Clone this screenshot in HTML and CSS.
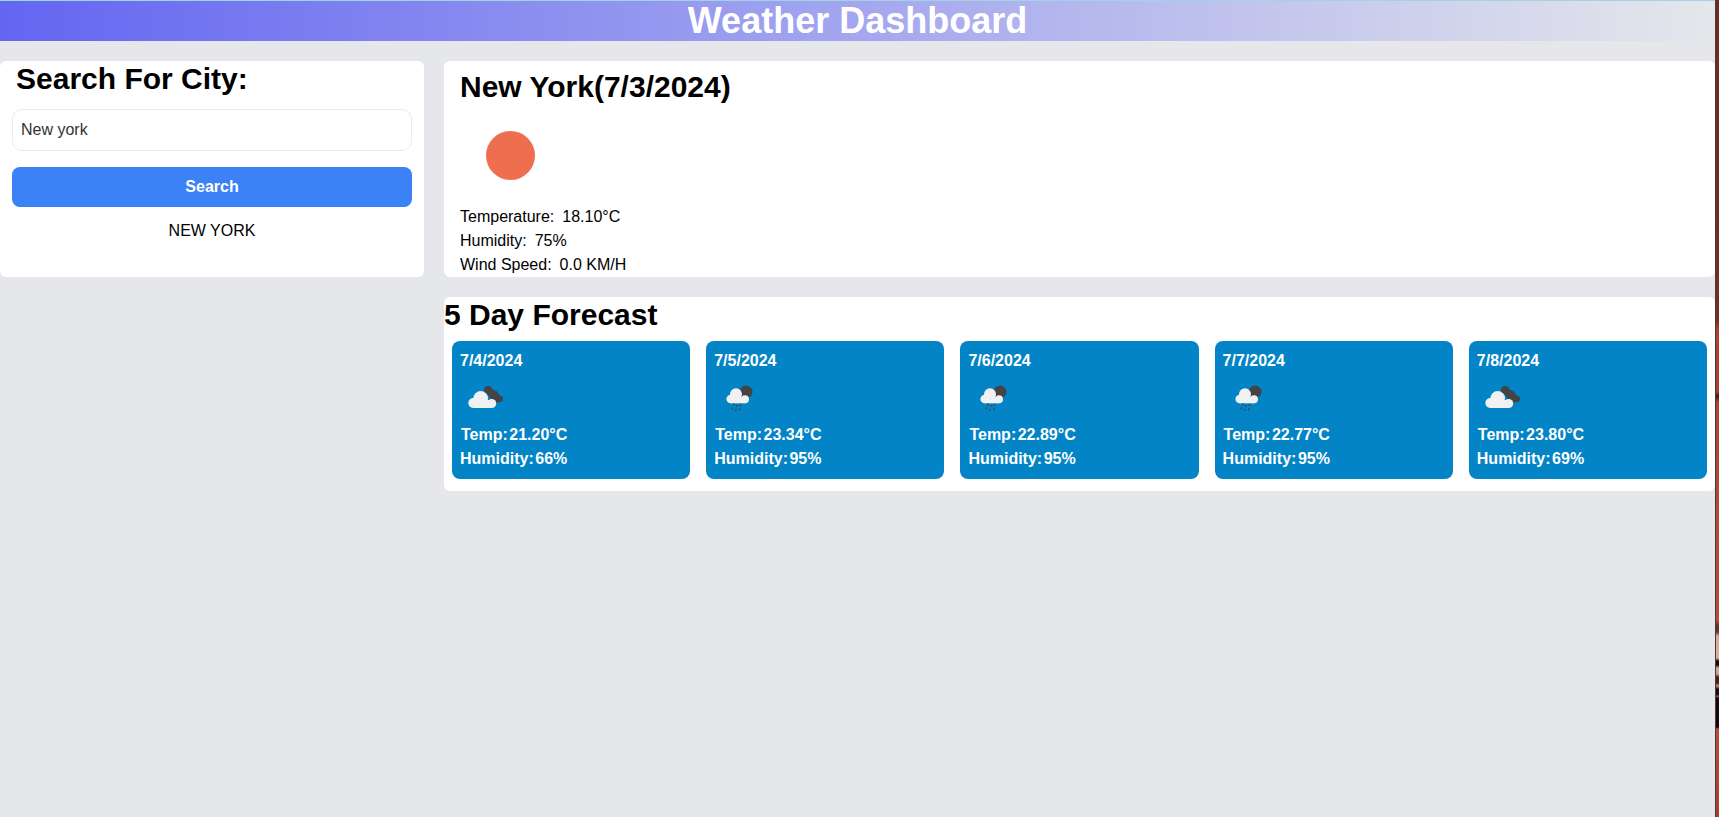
FILE: index.html
```html
<!DOCTYPE html>
<html lang="en">
<head>
<meta charset="utf-8">
<title>Weather Dashboard</title>
<link rel="stylesheet" href="styles.css">
</head>
<body>
<div class="page">
  <header class="banner"><h1 class="banner-title">Weather Dashboard</h1></header>
  <main class="layout">
    <aside class="search-card">
      <h2 class="search-title">Search For City:</h2>
      <input class="search-input" type="text" value="New york">
      <button class="search-button" type="button">Search</button>
      <p class="history-item">NEW YORK</p>
    </aside>
    <div class="results">
      <section class="current">
        <h2 class="section-title">New York(7/3/2024)</h2>
        <svg class="current-icon" viewBox="0 0 100 100"><circle cx="50.500" cy="50.500" r="24.500" fill="#ee6f4f"/></svg>
        <p class="stat"><span>Temperature:</span><span class="stat-value">18.10°C</span></p>
        <p class="stat"><span>Humidity:</span><span class="stat-value">75%</span></p>
        <p class="stat"><span>Wind Speed:</span><span class="stat-value">0.0 KM/H</span></p>
      </section>
      <section class="forecast">
        <h2 class="forecast-title">5 Day Forecast</h2>
        <div class="forecast-row">
          <article class="day">
            <p class="day-line">7/4/2024</p>
            <svg class="day-icon" viewBox="0 0 50 50"><use href="#clouds"/></svg>
            <p class="day-line"><span class="nudge">Temp:</span><span class="day-value">21.20°C</span></p>
            <p class="day-line"><span>Humidity:</span><span class="day-value">66%</span></p>
          </article>
          <article class="day">
            <p class="day-line">7/5/2024</p>
            <svg class="day-icon" viewBox="0 0 50 50"><use href="#rain"/></svg>
            <p class="day-line"><span class="nudge">Temp:</span><span class="day-value">23.34°C</span></p>
            <p class="day-line"><span>Humidity:</span><span class="day-value">95%</span></p>
          </article>
          <article class="day">
            <p class="day-line">7/6/2024</p>
            <svg class="day-icon" viewBox="0 0 50 50"><use href="#rain"/></svg>
            <p class="day-line"><span class="nudge">Temp:</span><span class="day-value">22.89°C</span></p>
            <p class="day-line"><span>Humidity:</span><span class="day-value">95%</span></p>
          </article>
          <article class="day">
            <p class="day-line">7/7/2024</p>
            <svg class="day-icon" viewBox="0 0 50 50"><use href="#rain"/></svg>
            <p class="day-line"><span class="nudge">Temp:</span><span class="day-value">22.77°C</span></p>
            <p class="day-line"><span>Humidity:</span><span class="day-value">95%</span></p>
          </article>
          <article class="day">
            <p class="day-line">7/8/2024</p>
            <svg class="day-icon" viewBox="0 0 50 50"><use href="#clouds"/></svg>
            <p class="day-line"><span class="nudge">Temp:</span><span class="day-value">23.80°C</span></p>
            <p class="day-line"><span>Humidity:</span><span class="day-value">69%</span></p>
          </article>
        </div>
      </section>
    </div>
  </main>
</div>
<div class="edge"></div>
<svg class="defs" width="0" height="0" aria-hidden="true">
  <defs>
    <g id="clouds">
      <g fill="#444">
        <circle cx="28" cy="17" r="4"/>
        <circle cx="34.500" cy="21" r="3.500"/>
        <circle cx="40" cy="26" r="3"/>
        <path d="M25 18l5-4 12 10-2 5-6 1z"/>
      </g>
      <g fill="#f1f1f1">
        <circle cx="13.300" cy="30" r="5"/>
        <circle cx="20.700" cy="25.300" r="7.300"/>
        <circle cx="31.700" cy="30.500" r="4.500"/>
        <rect x="13" y="27" width="19" height="8"/>
      </g>
    </g>
    <g id="rain">
      <circle cx="32" cy="19" r="6.500" fill="#444"/>
      <g fill="#f1f1f1">
        <circle cx="16.700" cy="26" r="4.300"/>
        <circle cx="22" cy="21.300" r="6"/>
        <circle cx="31" cy="26.300" r="4"/>
        <rect x="16.700" y="24" width="14.500" height="6.300"/>
      </g>
      <path stroke="#444" stroke-width="1.400" fill="none" d="M20 30.500l-.4 1.800M23 32l-.4 1.800M26.500 31l-.4 1.800M18.500 34.500l-.4 1.800M22 36l-.4 1.800M26 35.500l-.4 1.800"/>
    </g>
  </defs>
</svg>
</body>
</html>
```
FILE: styles.css
```css
* {
  box-sizing: border-box;
}

html,
body {
  margin: 0;
  height: 100%;
}

body {
  display: flex;
  background: #e5e7eb;
  color: #000;
  font: 16px/24px "Liberation Sans", Arial, sans-serif;
  overflow: hidden;
}

p,
h1,
h2 {
  margin: 0;
}

.page {
  flex: 1;
  min-width: 0;
}

.banner {
  height: 41px;
  background: linear-gradient(to right, #6366f1, #e5e7eb);
  border-top: 1px solid #9fd3e6;
  text-align: center;
}

.banner-title {
  color: #fff;
  font-size: 36px;
  line-height: 40px;
  font-weight: 700;
}

.layout {
  display: grid;
  grid-template-columns: 424px 1fr;
  column-gap: 20px;
  align-items: start;
  padding-top: 20px;
}

.search-card {
  height: 216px;
  padding: 0 12px;
  background: #fff;
  border-radius: 6px;
  text-align: center;
}

.search-title {
  margin-left: 4px;
  font-size: 30px;
  line-height: 36px;
  text-align: left;
}

.search-input {
  display: block;
  width: 100%;
  height: 42px;
  margin-top: 12px;
  padding: 0 8px;
  border: 1px solid #e9eaee;
  border-radius: 10px;
  background: #fff;
  color: #333;
  font: inherit;
  outline: none;
}

.search-button {
  display: block;
  width: 100%;
  height: 40px;
  margin-top: 16px;
  border: 0;
  border-radius: 8px;
  background: #3b82f6;
  color: #fff;
  font: inherit;
  font-weight: 700;
}

.history-item {
  margin-top: 12px;
}

.results {
  display: flex;
  flex-direction: column;
  gap: 20px;
}

.current {
  height: 216px;
  padding: 8px 16px 0;
  background: #fff;
  border-radius: 6px;
  overflow: hidden;
}

.section-title {
  font-size: 30px;
  line-height: 36px;
}

.current-icon {
  display: block;
  width: 100px;
  height: 100px;
}

.stat-value {
  margin-left: 8px;
}

.forecast {
  padding-bottom: 12px;
  background: #fff;
  border-radius: 6px;
}

.forecast-title {
  font-size: 30px;
  line-height: 36px;
}

.forecast-row {
  display: grid;
  grid-template-columns: repeat(5, 1fr);
  column-gap: 16px;
  margin-top: 8px;
  padding: 0 8px;
}

.day {
  padding: 8px;
  border-radius: 8px;
  background: #0284c7;
  color: #fff;
  font-weight: 700;
}

.day-icon {
  display: block;
  width: 50px;
  height: 50px;
}

.day-value {
  margin-left: 1.500px;
}

.nudge {
  margin-left: 1px;
}

.edge {
  flex: none;
  width: 4px;
  border-left: 1px solid #4a3a3a;
  background: linear-gradient(to bottom, #6e2a22 0, #762c24 320px, #b04030 330px, #ac3e2e 392px, #3c1a14 396px, #b04232 402px, #b84c3c 620px, #5e3028 626px, #6a3428 632px, #d8a898 636px, #dcb0a0 658px, #1c0a08 661px, #1c0a08 665px, #d4a494 668px, #cfa090 674px, #4a2018 677px, #4a2018 683px, #c89080 686px, #1c0a08 689px, #1c0a08 695px, #a06a5a 696px, #160806 698px, #160806 727px, #b84c3c 729px, #a83e30 817px);
}

.defs {
  position: absolute;
}
```
